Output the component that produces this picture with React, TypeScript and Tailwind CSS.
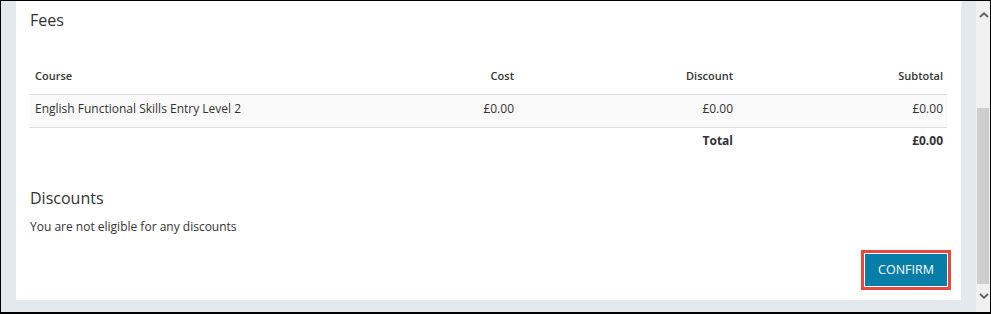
import React from "react";

const font = { fontFamily: '"Open Sans", "Liberation Sans", sans-serif' };

function Chevron({ up }: { up?: boolean }) {
  return (
    <svg width="10" height="6" viewBox="0 0 10 6" className="block">
      <polyline
        points={up ? "1,5 5,1.3 9,5" : "1,1 5,4.7 9,1"}
        fill="none"
        stroke="#606060"
        strokeWidth="1.8"
      />
    </svg>
  );
}

export default function App() {
  return (
    <div
      className="flex h-[314px] w-[991px] border-x border-t border-b-2 border-black bg-[#e4e9ed] text-[#333]"
      style={font}
    >
      <div className="flex w-[975px] flex-col px-[15px]">
        <div className="flex h-[299px] flex-col bg-white px-[14px] pt-[8px]">
          <h2 className="text-[16px] leading-[22px] font-normal">Fees</h2>

          <div className="mt-[31px] w-full">
            <div className="grid h-[33px] grid-cols-[1fr_219px_219px_210px] border-b border-[#dddddd] text-[11px] leading-[16px] font-semibold">
              <div className="flex items-end px-[5px] pb-[10px]">Course</div>
              <div className="flex items-end justify-end px-1 pb-[10px]">Cost</div>
              <div className="flex items-end justify-end px-1 pb-[10px]">Discount</div>
              <div className="flex items-end justify-end px-1 pb-[10px]">Subtotal</div>
            </div>
            <div className="grid h-[33px] grid-cols-[1fr_219px_219px_210px] border-b border-[#dddddd] bg-[#f9f9f9] text-[12px] leading-[17px]">
              <div className="px-[5px] pt-[5px]">English Functional Skills Entry Level 2</div>
              <div className="px-1 pt-[5px] text-right">£0.00</div>
              <div className="px-1 pt-[5px] text-right">£0.00</div>
              <div className="px-1 pt-[5px] text-right">£0.00</div>
            </div>
            <div className="grid h-[32px] grid-cols-[1fr_219px_219px_210px] text-[12px] leading-[17px] font-bold">
              <div className="px-[5px] pt-[4px]"></div>
              <div className="px-1 pt-[4px]"></div>
              <div className="px-1 pt-[4px] text-right">Total</div>
              <div className="px-1 pt-[4px] text-right">£0.00</div>
            </div>
          </div>

          <h2 className="mt-[27px] text-[16px] leading-[22px] font-normal">Discounts</h2>
          <p className="mt-[9px] text-[12px] leading-[17px]">You are not eligible for any discounts</p>

          <div className="mt-[19px] flex justify-end">
            <button className="h-[32px] w-[82px] bg-[#067ea8] text-[12.5px] text-white shadow-[0_0_0_1px_#ffffff,0_0_0_4px_#e8483f]">
              CONFIRM
            </button>
          </div>
        </div>
      </div>

      <div className="flex w-[14px] flex-col bg-[#f0f0f0]">
        <div className="flex h-[18px] items-end justify-center pb-[1px] pl-[2px]">
          <Chevron up />
        </div>
        <div className="flex-1 px-px pt-[89px]">
          <div className="h-[176px] bg-[#cdcdcd]"></div>
        </div>
        <div className="flex h-[21px] justify-center pt-[2px] pl-[2px]">
          <Chevron />
        </div>
      </div>
    </div>
  );
}
